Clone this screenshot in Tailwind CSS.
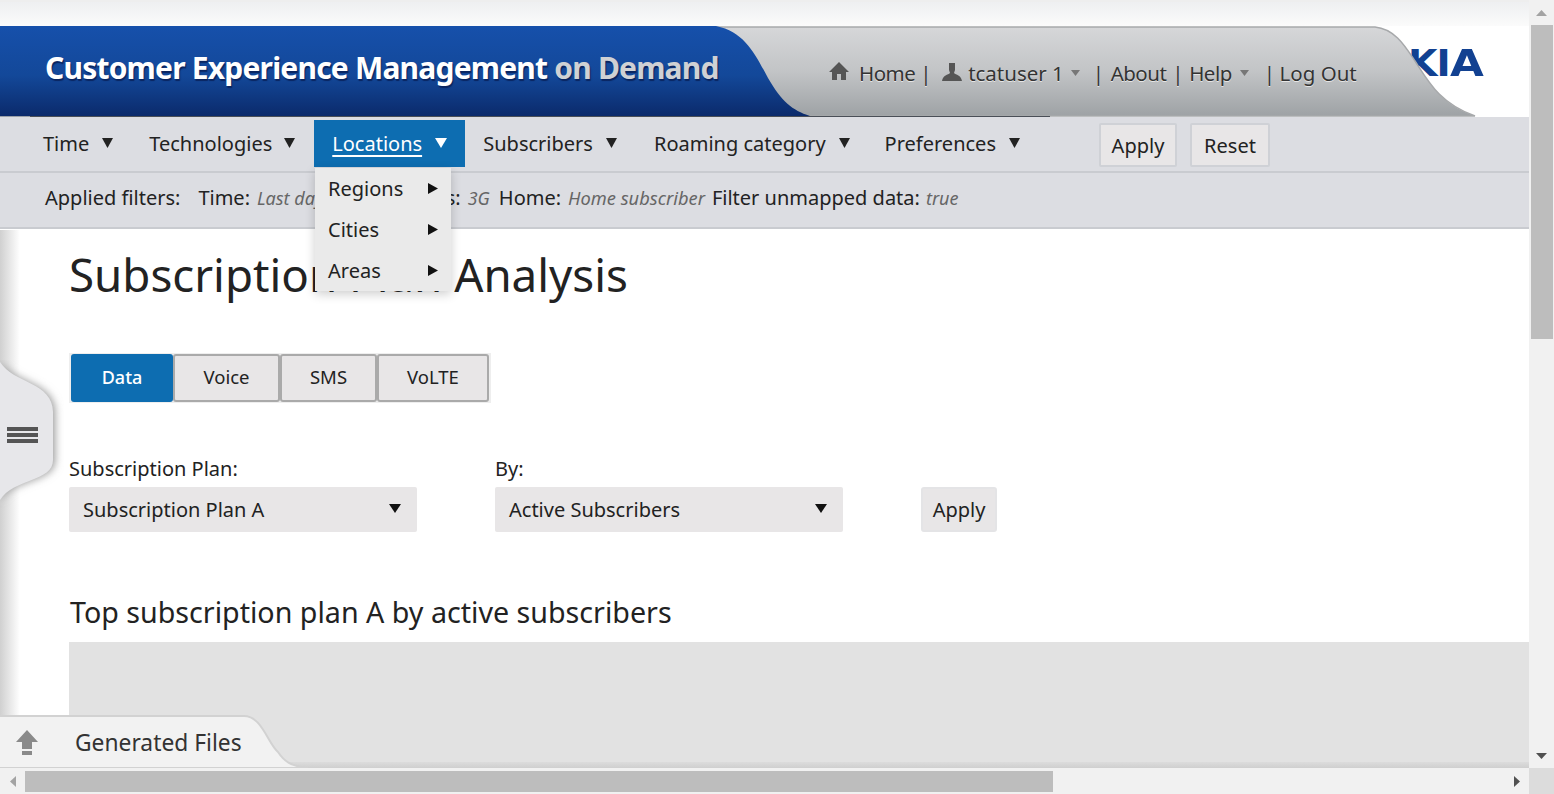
<!DOCTYPE html>
<html lang="en">
<head>
  <meta charset="UTF-8">
  <title>Customer Experience Management on Demand</title>
  <script src="https://cdn.jsdelivr.net/npm/@tailwindcss/browser@4"></script>
</head>
<body class="h-[794px] w-[1554px] overflow-hidden bg-white font-['Noto_Sans',sans-serif] text-[#222]">
  <div class="flex h-[768px]">
    <!-- page viewport -->
    <div class="relative h-full w-[1529px] overflow-hidden">
      <!-- top strip -->
      <div class="h-[26px] border-t-2 border-[#eee] bg-gradient-to-b from-[#eeeff1] to-[#fbfbfb]"></div>

      <!-- banner -->
      <div class="relative h-[91px]">
        <div class="absolute left-[1408px] top-[14px] font-['DejaVu_Sans',sans-serif] text-[38px] leading-[46px] font-bold tracking-[-1px] whitespace-nowrap text-[#124191]">KI<span class="inline-block origin-left scale-x-[1.15]">A</span></div>
        <svg class="absolute left-0 top-0" width="1529" height="91" viewBox="0 0 1529 91">
          <defs>
            <linearGradient id="blue" x1="0" y1="0" x2="0" y2="1"><stop offset="0" stop-color="#1650ab"/><stop offset="0.55" stop-color="#134899"/><stop offset="1" stop-color="#0b2a6b"/></linearGradient>
            <linearGradient id="grey" x1="0" y1="0" x2="0" y2="1"><stop offset="0" stop-color="#d6d7d9"/><stop offset="0.5" stop-color="#c2c4c6"/><stop offset="1" stop-color="#9ea2a5"/></linearGradient>
          </defs>
          <path d="M1475 90 C1440 78 1428 55 1415 35 C1405 20 1395 3 1375 1 L700 1 L780 90 Z" fill="url(#grey)" stroke="#a7a9ab" stroke-width="1.500"/>
          <path d="M0 0 L716 0 C745 6 755 28 768 52 C782 76 792 84 810 90 L0 90 Z" fill="url(#blue)"/>
          <rect x="0" y="90" width="30" height="1" fill="#9aa0a8"/>
          <rect x="30" y="90" width="1020" height="1" fill="#4a4f57"/>
        </svg>
        <div class="relative flex h-[90px] items-center pl-[45px]">
          <h1 class="w-[783px] pb-[6px] text-[30px] leading-none font-bold tracking-[-0.8px] whitespace-nowrap text-white [text-shadow:1px_2px_1px_#0a2560]">Customer Experience Management <span class="text-[#cfd1d4]">on Demand</span></h1>
          <nav class="flex items-center pt-[4px] text-[20.500px] tracking-[-0.5px] whitespace-nowrap text-[#333] [text-shadow:0_1px_0_#e6e6e6]">
            <svg class="mb-[5px] ml-[1px]" width="20" height="20" viewBox="0 0 20 20"><path fill="#555" d="M10 1 L20 11 L17 11 L17 19 L12 19 L12 13 L8 13 L8 19 L3 19 L3 11 L0 11 Z"/></svg>
            <span class="ml-[10px]">Home</span><span class="ml-[5px]">|</span>
            <svg class="mb-[3px] ml-[11px]" width="20" height="20" viewBox="0 0 20 20"><path fill="#555" d="M7 1 H13 V8 L12 11 C14 13 19 13 20 19 H0 C1 13 6 13 8 11 L7 8 Z"/></svg>
            <span class="ml-[6px] tracking-normal">tcatuser 1</span>
            <svg class="ml-[7px]" width="9" height="8" viewBox="0 0 9 8"><path fill="#777" d="M0 1 H9 L4.500 7 Z"/></svg>
            <span class="ml-[13px]">|</span><span class="ml-[7px]">About</span><span class="ml-[6px]">|</span><span class="ml-[6px]">Help</span>
            <svg class="ml-[8px]" width="9" height="8" viewBox="0 0 9 8"><path fill="#777" d="M0 1 H9 L4.500 7 Z"/></svg>
            <span class="ml-[15px]">|</span><span class="ml-[5px] tracking-normal">Log Out</span>
          </nav>
        </div>
      </div>

      <!-- menu bar -->
      <div class="flex h-[56px] border-b-2 border-[#c9cbd0] bg-[#dcdde2] text-[20px] whitespace-nowrap">
        <div class="flex items-start pl-[43px] pt-[3px]">
          <a class="flex h-[47px] items-center pt-[1px]">Time<svg class="ml-[13px] mb-[3px]" width="11" height="10" viewBox="0 0 11 10"><path fill="#222" d="M0 0 H11 L5.500 10 Z"/></svg></a>
          <a class="ml-[36px] flex h-[47px] items-center pt-[1px]">Technologies<svg class="ml-[12px] mb-[3px]" width="11" height="10" viewBox="0 0 11 10"><path fill="#222" d="M0 0 H11 L5.500 10 Z"/></svg></a>
          <a class="ml-[19px] flex h-[47px] w-[151px] items-center bg-[#0d6db1] pl-[18px] pt-[1px] text-white"><span class="underline decoration-2 underline-offset-[4px]">Locations</span><svg class="ml-[13px] mb-[3px]" width="12" height="10" viewBox="0 0 12 10"><path fill="#fff" d="M0 0 H12 L6 10 Z"/></svg></a>
          <a class="ml-[18px] flex h-[47px] items-center pt-[1px]">Subscribers<svg class="ml-[13px] mb-[3px]" width="11" height="10" viewBox="0 0 11 10"><path fill="#222" d="M0 0 H11 L5.500 10 Z"/></svg></a>
          <a class="ml-[37px] flex h-[47px] items-center pt-[1px]">Roaming category<svg class="ml-[13px] mb-[3px]" width="11" height="10" viewBox="0 0 11 10"><path fill="#222" d="M0 0 H11 L5.500 10 Z"/></svg></a>
          <a class="ml-[35px] flex h-[47px] items-center pt-[1px]">Preferences<svg class="ml-[13px] mb-[3px]" width="11" height="10" viewBox="0 0 11 10"><path fill="#222" d="M0 0 H11 L5.500 10 Z"/></svg></a>
        </div>
        <div class="ml-[79px] flex gap-[13px] pt-[6px]">
          <button class="h-[44px] w-[78px] rounded-[2px] border-2 border-[#cfd1d6] bg-[#e8e6e7] pt-[2px]">Apply</button>
          <button class="h-[44px] w-[80px] rounded-[2px] border-2 border-[#cfd1d6] bg-[#e8e6e7] pt-[2px]">Reset</button>
        </div>
      </div>

      <!-- applied filters -->
      <div class="flex h-[56px] items-center border-b-2 border-[#c9cbd0] bg-[#dcdde2] pb-[4px] pl-[45px] text-[20px] whitespace-nowrap">
        <span>Applied filters:</span>
        <span class="ml-[18px]">Time:</span><i class="ml-[7px] text-[18px] text-[#666]">Last day</i>
        <span class="ml-[9px]">Technologies:</span><i class="ml-[7px] text-[18px] text-[#666]">3G</i>
        <span class="ml-[9px]">Home:</span><i class="ml-[7px] text-[18.300px] text-[#666]">Home subscriber</i>
        <span class="ml-[7px]">Filter unmapped data:</span><i class="ml-[6px] text-[18px] text-[#666]">true</i>
      </div>

      <!-- locations dropdown -->
      <ul class="absolute left-[315px] top-[168px] z-20 w-[136px] bg-[#eaeaea] text-[20px] shadow-[0_3px_10px_rgba(0,0,0,0.2)]">
        <li class="flex h-[41px] items-center justify-between pl-[13px] pr-[13px]">Regions<svg width="10" height="11" viewBox="0 0 10 11"><path fill="#111" d="M0 0 L10 5.500 L0 11 Z"/></svg></li>
        <li class="flex h-[41px] items-center justify-between pl-[13px] pr-[13px]">Cities<svg width="10" height="11" viewBox="0 0 10 11"><path fill="#111" d="M0 0 L10 5.500 L0 11 Z"/></svg></li>
        <li class="flex h-[41px] items-center justify-between pl-[13px] pr-[13px]">Areas<svg width="10" height="11" viewBox="0 0 10 11"><path fill="#111" d="M0 0 L10 5.500 L0 11 Z"/></svg></li>
      </ul>

      <!-- main content -->
      <main class="pl-[69px]">
        <h2 class="mt-[15px] text-[45.700px] leading-[60px]">Subscription Plan Analysis</h2>

        <div class="mt-[49px] flex h-[50px] w-[422px] bg-[#eeeeee] py-[1px] pl-[2px] text-[18.500px]">
          <button class="h-[48px] w-[102px] rounded-[3px] bg-[#0d6db1] pb-[2px] text-[18px] font-medium text-white">Data</button>
          <button class="h-[48px] w-[107px] rounded-[3px] border-2 border-[#aaa] bg-[#e8e6e7] pb-[2px]">Voice</button>
          <button class="h-[48px] w-[97px] rounded-[3px] border-2 border-[#aaa] bg-[#e8e6e7] pb-[2px]">SMS</button>
          <button class="h-[48px] w-[112px] rounded-[3px] border-2 border-[#aaa] bg-[#e8e6e7] pb-[2px]">VoLTE</button>
        </div>

        <div class="mt-[51px] flex items-end text-[20px]">
          <label class="w-[348px]">
            <span class="block leading-[30px]">Subscription Plan:</span>
            <span class="mt-[3px] flex h-[45px] items-center justify-between rounded-[2px] bg-[#e8e6e7] pl-[14px] pr-[16px]">Subscription Plan A<svg class="mb-[3px]" width="12" height="9" viewBox="0 0 12 9"><path fill="#111" d="M0 0 H12 L6 9 Z"/></svg></span>
          </label>
          <label class="ml-[78px] w-[348px]">
            <span class="block leading-[30px]">By:</span>
            <span class="mt-[3px] flex h-[45px] items-center justify-between rounded-[2px] bg-[#e8e6e7] pl-[14px] pr-[16px]">Active Subscribers<svg class="mb-[3px]" width="12" height="9" viewBox="0 0 12 9"><path fill="#111" d="M0 0 H12 L6 9 Z"/></svg></span>
          </label>
          <button class="ml-[78px] h-[45px] w-[76px] rounded-[3px] border-2 border-[#e4e4e6] bg-[#e8e6e7]">Apply</button>
        </div>

        <h3 class="mt-[60px] pl-[1px] text-[28.650px] leading-[40px]">Top subscription plan A by active subscribers</h3>
        <div class="mt-[10px] h-[130px] bg-[#e2e2e2]"></div>
      </main>

      <!-- left edge shadow + sidebar handle -->
      <div class="absolute bottom-[50px] left-0 top-[230px] w-[20px] bg-gradient-to-r from-[#d0d0d0] to-white"></div>
      <svg class="absolute left-0 top-[360px]" width="64" height="150" viewBox="0 0 64 150">
        <defs><filter id="hs" x="-30%" y="-10%" width="160%" height="120%"><feGaussianBlur stdDeviation="4"/></filter></defs>
        <path d="M0 2 C14 24 55 22 55 52 L55 100 C55 122 14 118 0 140 Z" fill="#999" filter="url(#hs)"/>
        <path d="M0 2 C14 24 53 22 53 52 L53 100 C53 122 14 118 0 140 Z" fill="#e7e7ea"/>
        <rect x="7" y="67" width="31" height="4" fill="#555"/><rect x="7" y="73" width="31" height="4" fill="#555"/><rect x="7" y="79" width="31" height="4" fill="#555"/>
      </svg>

      <!-- generated files tab -->
      <div class="absolute bottom-0 left-0 right-0 h-[6px] bg-gradient-to-b from-[#dcdcdc] to-[#cfcfcf]"></div>
      <svg class="absolute bottom-0 left-0" width="310" height="54" viewBox="0 0 310 54">
        <path d="M-3 2 L244 2 C262 2 268 30 278 38 C284 47 290 52 308 54 L-3 54 Z" fill="#f2f2f2" stroke="#d2d2d2" stroke-width="2"/>
      </svg>
      <div class="absolute bottom-[9px] left-[16px] flex h-[32px] items-center text-[22.800px] text-[#333]">
        <svg width="22" height="28" viewBox="0 0 22 28"><path fill="#8a8a8a" d="M11 1 L22 13 L16 13 L16 20 L6 20 L6 13 L0 13 Z"/><rect x="6" y="22" width="10" height="4" fill="#8a8a8a"/></svg>
        <span class="ml-[37px]">Generated Files</span>
      </div>
    </div>

    <!-- vertical scrollbar -->
    <div class="flex h-full w-[25px] flex-col bg-[#f1f1f1]">
      <div class="flex h-[25px] items-center justify-center"><svg width="11" height="6" viewBox="0 0 11 6"><path fill="#a3a3a3" d="M5.500 0 L11 6 H0 Z"/></svg></div>
      <div class="ml-[2px] h-[314px] w-[22px] bg-[#bdbdbd]"></div>
      <div class="flex-1"></div>
      <div class="flex h-[25px] items-center justify-center"><svg width="11" height="6" viewBox="0 0 11 6"><path fill="#505050" d="M0 0 H11 L5.500 6 Z"/></svg></div>
    </div>
  </div>

  <!-- horizontal scrollbar -->
  <div class="flex h-[26px]">
    <div class="flex w-[1529px] items-center bg-[#f1f1f1]">
      <div class="flex w-[25px] justify-center"><svg width="6" height="11" viewBox="0 0 6 11"><path fill="#a3a3a3" d="M6 0 V11 L0 5.500 Z"/></svg></div>
      <div class="h-[21px] w-[1028px] bg-[#bdbdbd]"></div>
      <div class="flex-1"></div>
      <div class="flex w-[25px] justify-center"><svg width="6" height="11" viewBox="0 0 6 11"><path fill="#505050" d="M0 0 L6 5.500 L0 11 Z"/></svg></div>
    </div>
    <div class="w-[25px] bg-[#dcdcdc]"></div>
  </div>
</body>
</html>
